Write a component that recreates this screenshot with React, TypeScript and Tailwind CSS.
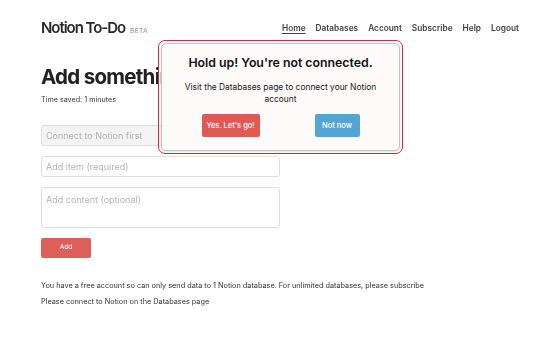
const NAV = ["Home", "Databases", "Account", "Subscribe", "Help", "Logout"] as const;

function Header() {
	return (
		<div className="flex items-center justify-between pl-[41px] pr-[31px] pt-[17px]">
			<div className="flex items-baseline gap-[5px]">
				<span className="text-[15px] font-semibold tracking-[-0.07em] text-[#2a2a2a]">
					Notion To-Do
				</span>
				<span className="text-[6.5px] font-medium tracking-[0.05em] text-[#9a9a9a]">
					BETA
				</span>
			</div>
			<nav className="flex gap-[10px] text-[8.3px] font-semibold text-[#444]">
				{NAV.map((item) => (
					<span key={item} className={item === "Home" ? "underline underline-offset-2" : ""}>
						{item}
					</span>
				))}
			</nav>
		</div>
	);
}

function Field({ placeholder, disabled, tall }: { placeholder: string; disabled?: boolean; tall?: boolean }) {
	return (
		<div
			className={`w-[239px] rounded-[3px] border border-[#dedede] px-[4px] text-[9px] text-[#b3b3b3] ${
				tall ? "h-[41px] pt-[5px]" : "flex h-[21px] items-center"
			} ${disabled ? "bg-[#f3f3f3]" : "bg-white"}`}
		>
			{placeholder}
		</div>
	);
}

function Modal() {
	return (
		<div className="absolute left-[158px] top-[40px] w-[245px] rounded-[7px] border-[1.5px] border-[#c8313c] p-[2px]">
			<div className="flex flex-col items-center rounded-[5px] border border-[#c4c4c4] bg-[#fcfbf9] pb-[13px] pt-[10px] shadow-sm">
				<h2 className="text-[12.3px] font-semibold text-[#111]">Hold up! You&apos;re not connected.</h2>
				<p className="mt-[9px] w-[205px] text-center text-[8.4px] leading-[12px] text-[#222]">
					Visit the Databases page to connect your Notion account
				</p>
				<div className="mt-[9px] flex gap-[55px]">
					<button className="h-[23px] w-[58px] rounded-[2px] bg-[#dd5a55] text-[7.5px] font-medium text-white">
						Yes. Let&apos;s go!
					</button>
					<button className="h-[23px] w-[45px] rounded-[2px] bg-[#55a4d6] text-[7.5px] font-medium text-white">
						Not now
					</button>
				</div>
			</div>
		</div>
	);
}

export default function App() {
	return (
		<div className="relative h-[354px] w-[550px] overflow-hidden bg-white font-['Inter',sans-serif]">
			<div className="blur-[0.6px]">
				<Header />
				<div className="pl-[41px]">
					<h1 className="mt-[23px] whitespace-nowrap text-[20.5px] font-bold leading-[28px] tracking-[-0.035em] text-[#222]">
						Add something to Notion
					</h1>
					<p className="mt-[4px] text-[7.2px] text-[#3a3a3a]">Time saved: 1 minutes</p>
					<div className="mt-[20px] flex flex-col gap-[10px]">
						<Field placeholder="Connect to Notion first" disabled />
						<Field placeholder="Add item (required)" />
						<Field placeholder="Add content (optional)" tall />
					</div>
					<button className="mt-[10px] h-[20px] w-[50px] rounded-[2px] bg-[#de5f5a] text-[6.5px] font-medium text-white">
						Add
					</button>
					<p className="mt-[23px] text-[7.3px] text-[#333]">
						You have a free account so can only send data to 1 Notion database. For unlimited databases, please subscribe
					</p>
					<p className="mt-[5px] text-[7.3px] text-[#333]">Please connect to Notion on the Databases page</p>
				</div>
			</div>
			<Modal />
		</div>
	);
}
